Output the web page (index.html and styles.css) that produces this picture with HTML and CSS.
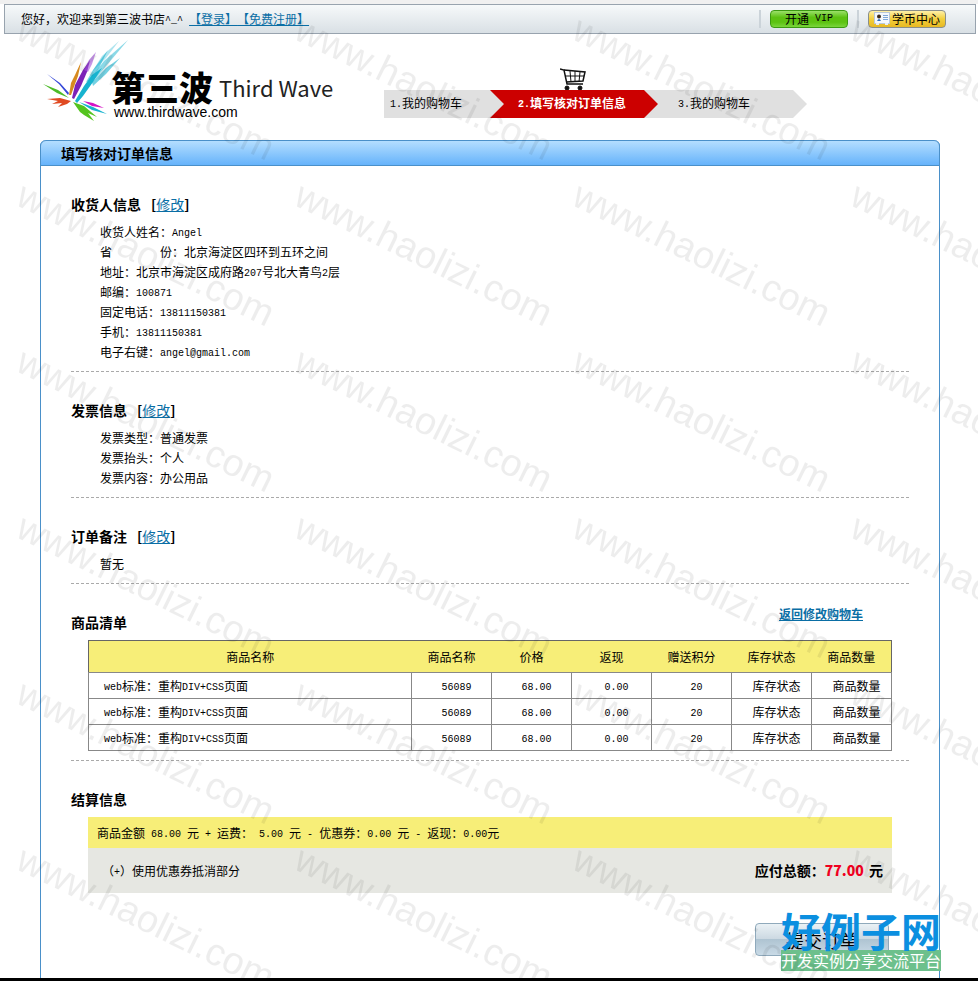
FILE: index.html
```
<!DOCTYPE html>
<html lang="zh-CN">
<head>
    <meta charset="UTF-8">
    <meta name="viewport" content="width=device-width, initial-scale=1.0">
    <title>第三波书店</title>
    <link rel="stylesheet" href="styles.css">
</head>
<body>
    <div class="topbar">
        <p class="welcome">您好，欢迎来到第三波书店<span class="en">^_^ </span><a href="#">【登录】</a><a href="#">【免费注册】</a></p>
        <div class="top-buttons">
            <span class="divider"></span>
            <button type="button" class="top-btn vip">开通<span class="en"> VIP</span></button>
            <span class="divider"></span>
            <button type="button" class="top-btn coin">
                <svg width="16" height="14" viewBox="0 0 16 14" aria-hidden="true">
                    <rect x="0.5" y="0.5" width="15" height="11" fill="#f4f8fc" stroke="#b9c8da"/>
                    <circle cx="5" cy="4.5" r="2" fill="#3a2a1a"/>
                    <path d="M3 9 Q5 5 7 9 Z" fill="#2f6fc0"/>
                    <path d="M9 3.5H14M9 5.5H14M9 7.5H14" stroke="#7da7d8"/>
                    <path d="M2 12h3M11 12h3" stroke="#e8eef4" stroke-width="2"/>
                </svg>
                学币中心
            </button>
        </div>
    </div>

    <div class="page">
        <header class="header">
            <div class="logo">
                <svg class="splash" width="75" height="80" viewBox="0 0 75 80" aria-hidden="true">
                    <g fill="#17b3cf">
                        <path d="M29 57 L38 42 L46 31 L56 24 L47 38 L37 52 L31 59 Z"/>
                        <path d="M40 38 L47 26 L62 6 L53 24 L45 36 Z" opacity="0.6"/>
                        <path d="M44 35 L58 17 L82 -4 L66 15 L50 34 Z" opacity="0.5"/>
                        <path d="M46 38 L60 24 L74 14 L60 30 L47 42 Z" opacity="0.6"/>
                        <path d="M46 28 L56 12 L73 -3 L60 14 Z" opacity="0.35"/>
                        <path d="M33 58 L47 63 L61 70 L46 66 Z"/>
                    </g>
                    <path d="M26 54 L29 41 L37 26 L44 16 L41 28 L35 42 L28 55 Z" fill="#7c22b8"/>
                    <path d="M38 26 L43 16 L50 8 L46 20 L42 28 Z" fill="#a04fd8" opacity="0.6"/>
                    <path d="M23 51 L25 39 L29 31 L35 18 L32 32 L29 40 L25 51 Z" fill="#d78a1f"/>
                    <path d="M22 51 L13 40 L1 30 L14 39 L23 49 Z" fill="#3548d8"/>
                    <path d="M23 54 L11 49 L-3 40 L12 46 Z" fill="#4cbb27"/>
                    <path d="M25 57 L14 54 L1 55 L12 57 L6 60 L16 59 L12 63 L21 60 Z" fill="#e04a22"/>
                    <path d="M27 58 L38 62 L51 73 L42 69 L48 77 L38 71 L34 68 Z" fill="#55c41f"/>
                    <path d="M37 57 L47 59 L58 64 L46 62 Z" fill="#d414c4"/>
                </svg>
                <div class="logo-text">
                    <p class="logo-name"><strong>第三波</strong><span>Third Wave</span></p>
                    <p class="logo-url">www.thirdwave.com</p>
                </div>
            </div>

            <div class="progress">
                <svg class="cart" width="26" height="23" viewBox="0 0 26 23" fill="none" stroke="#111" aria-hidden="true">
                    <path d="M0 1 L4 2 L7 16 H23" stroke-width="1.5"/>
                    <path d="M4 2 L25 4 L23 13 L6 14" stroke-width="1.5"/>
                    <path d="M5 8 H24M10 3 L11 14M15 3 V14M20 4 L19 14"/>
                    <circle cx="7" cy="20" r="2" fill="#111"/>
                    <circle cx="20" cy="20" r="2" fill="#111"/>
                </svg>
                <ol class="steps">
                    <li><span class="en">1.</span>我的购物车</li>
                    <li class="current"><span class="en">2.</span>填写核对订单信息</li>
                    <li><span class="en">3.</span>我的购物车</li>
                </ol>
            </div>
        </header>

        <main class="order">
            <h1>填写核对订单信息</h1>

            <section>
                <h2>收货人信息<span class="edit">[<a href="#">修改</a>]</span></h2>
                <ul class="info">
                    <li>收货人姓名：<span class="en">Angel</span></li>
                    <li>省　　　　份：北京海淀区四环到五环之间</li>
                    <li>地址：北京市海淀区成府路<span class="en">207</span>号北大青鸟<span class="en">2</span>层</li>
                    <li>邮编：<span class="en">100871</span></li>
                    <li>固定电话：<span class="en">13811150381</span></li>
                    <li>手机：<span class="en">13811150381</span></li>
                    <li>电子右键：<span class="en">angel@gmail.com</span></li>
                </ul>
            </section>

            <section>
                <h2>发票信息<span class="edit">[<a href="#">修改</a>]</span></h2>
                <ul class="info">
                    <li>发票类型：普通发票</li>
                    <li>发票抬头：个人</li>
                    <li>发票内容：办公用品</li>
                </ul>
            </section>

            <section>
                <h2>订单备注<span class="edit">[<a href="#">修改</a>]</span></h2>
                <ul class="info">
                    <li>暂无</li>
                </ul>
            </section>

            <section>
                <div class="list-head">
                    <h2>商品清单</h2>
                    <a href="#">返回修改购物车</a>
                </div>
                <table class="goods">
                    <thead>
                        <tr>
                            <th class="name">商品名称</th>
                            <th>商品名称</th>
                            <th>价格</th>
                            <th>返现</th>
                            <th>赠送积分</th>
                            <th>库存状态</th>
                            <th>商品数量</th>
                        </tr>
                    </thead>
                    <tbody>
                        <tr>
                            <td class="name"><span class="en">web</span>标准：重构<span class="en">DIV+CSS</span>页面</td>
                            <td><span class="en">56089</span></td>
                            <td><span class="en">68.00</span></td>
                            <td><span class="en">0.00</span></td>
                            <td><span class="en">20</span></td>
                            <td>库存状态</td>
                            <td>商品数量</td>
                        </tr>
                        <tr>
                            <td class="name"><span class="en">web</span>标准：重构<span class="en">DIV+CSS</span>页面</td>
                            <td><span class="en">56089</span></td>
                            <td><span class="en">68.00</span></td>
                            <td><span class="en">0.00</span></td>
                            <td><span class="en">20</span></td>
                            <td>库存状态</td>
                            <td>商品数量</td>
                        </tr>
                        <tr>
                            <td class="name"><span class="en">web</span>标准：重构<span class="en">DIV+CSS</span>页面</td>
                            <td><span class="en">56089</span></td>
                            <td><span class="en">68.00</span></td>
                            <td><span class="en">0.00</span></td>
                            <td><span class="en">20</span></td>
                            <td>库存状态</td>
                            <td>商品数量</td>
                        </tr>
                    </tbody>
                </table>
            </section>

            <section class="checkout">
                <h2>结算信息</h2>
                <p class="sum">商品金额<span class="en"> 68.00 </span>元<span class="en"> + </span>运费：<span class="en"> 5.00 </span>元<span class="en"> - </span>优惠券：<span class="en">0.00 </span>元<span class="en"> - </span>返现：<span class="en">0.00</span>元</p>
                <div class="total">
                    <p>（<span class="en">+</span>）使用优惠券抵消部分</p>
                    <p class="pay">应付总额：<strong>77.00</strong> 元</p>
                </div>
                <button type="submit" class="submit">提交订单</button>
            </section>
        </main>
    </div>
    <footer class="bottom-line"></footer>

    <div class="badge">
        <p class="badge-name">好例子网</p>
        <p class="badge-desc">开发实例分享交流平台</p>
    </div>

    <svg class="watermark" aria-hidden="true">
        <defs>
            <pattern id="mark" width="278" height="166" patternUnits="userSpaceOnUse" y="16">
                <text transform="translate(14 22) rotate(26)">www.haolizi.com</text>
            </pattern>
        </defs>
        <rect width="100%" height="100%" fill="url(#mark)"/>
    </svg>
</body>
</html>
```
FILE: styles.css
```
:root {
    --link: #0a6ea5;
    --blue-line: #4a90c9;
    --yellow: #f7ee78;
    --step-bg: #e0e0e0;
}

* {
    box-sizing: border-box;
    margin: 0;
    padding: 0;
}
body {
    position: relative;
    display: flex;
    flex-direction: column;
    min-height: 100vh;
    border-top: 4px solid #f0f0f0;
    font: 12px/20px "Noto Sans CJK SC", sans-serif;
    text-spacing-trim: space-all;
    color: #000;
    background: #fff;
}
ul, ol {
    list-style: none;
}
a {
    color: var(--link);
}
button {
    font: inherit;
    cursor: pointer;
}
/* half-width latin letters and digits */
.en {
    font-family: "Liberation Mono", monospace;
    font-size: 10px;
    line-height: 1;
    vertical-align: 1px;
    white-space: pre;
}

/* top bar */
.topbar {
    display: flex;
    justify-content: space-between;
    align-items: center;
    height: 30px;
    margin: 0 2px 0 4px;
    padding: 0 29px 0 16px;
    border: 1px solid #98a3ae;
    background: linear-gradient(#f6f9fa, #d9e0e5);
}
.top-buttons {
    display: flex;
    gap: 9px;
}
.divider {
    width: 2px;
    background: #cbd3d9;
}
.top-btn {
    display: flex;
    align-items: center;
    justify-content: center;
    width: 78px;
    height: 18px;
    line-height: 16px;
    border-radius: 4px;
    white-space: nowrap;
}
.vip {
    border: 1px solid #3c9a12;
    background: linear-gradient(#9be06a, #5cc212 40%, #5cc212 70%, #7ad63c);
}
.coin {
    gap: 2px;
    border: 1px solid #8a8f8a;
    background: linear-gradient(#fff0a8, #f2cf3c 50%, #e8b923);
}

/* header */
.page {
    display: flex;
    flex: 1;
    flex-direction: column;
    padding-left: 2px;
}
.header {
    display: flex;
    justify-content: space-between;
    align-items: flex-start;
    width: 100%;
    max-width: 900px;
    height: 106px;
    margin: 0 auto;
    padding: 10px 133px 0 6px;
}
.logo {
    display: flex;
}
.splash {
    overflow: visible;
    margin-right: -14px;
}
.logo-text {
    padding-top: 26px;
}
.logo-name {
    display: flex;
    align-items: center;
    gap: 6px;
    height: 34px;
    padding-left: 4px;
    white-space: nowrap;
}
.logo-name strong {
    font-size: 34px;
    font-weight: 900;
}
.logo-name span {
    font-size: 22px;
    color: #222;
}
.logo-url {
    padding-left: 7px;
    font: 14px/16px "Liberation Sans", sans-serif;
}
.progress {
    padding-top: 24px;
}
.cart {
    display: block;
    margin-left: 176px;
}
.steps {
    display: flex;
    width: 423px;
    height: 28px;
    line-height: 26px;
    margin-top: -1px;
    background: var(--step-bg);
    clip-path: polygon(0 0, 409px 0, 100% 50%, 409px 100%, 0 100%);
}
.steps li {
    width: 106px;
    padding-left: 6px;
}
.steps .current {
    width: 168px;
    padding-left: 28px;
    color: #fff;
    font-weight: bold;
    background: #c00;
    clip-path: polygon(0 0, 154px 0, 100% 50%, 154px 100%, 0 100%, 14px 50%);
}
.steps .current + li {
    padding-left: 20px;
}

/* order box */
.order {
    flex: 1;
    width: 100%;
    max-width: 900px;
    margin: 0 auto;
    border: 1px solid var(--blue-line);
    border-width: 0 1px;
    border-radius: 6px 6px 0 0;
}
h1 {
    height: 26px;
    margin: 0 -1px;
    padding-left: 20px;
    font-size: 14px;
    line-height: 24px;
    border: 1px solid var(--blue-line);
    border-radius: 6px 6px 0 0;
    background: linear-gradient(#b4deff, #66b3fb);
}
section {
    margin: 0 30px;
    padding: 28px 0 9px;
    border-bottom: 1px dashed #aaa;
}
h2 {
    margin-bottom: 8px;
    font-size: 14px;
    line-height: 20px;
}
.edit {
    margin-left: 10px;
}
.edit a {
    font-weight: normal;
}
.info {
    padding-left: 29px;
}
.list-head {
    display: flex;
    justify-content: space-between;
}
.list-head a {
    margin: -8px 46px 0 0;
    font-weight: bold;
}

/* goods table */
.goods {
    width: calc(100% - 34px);
    margin: 0 17px;
    border-collapse: collapse;
    table-layout: fixed;
    border: 1px solid #666;
}
.goods th {
    width: 80px;
    height: 32px;
    font-weight: normal;
    background: var(--yellow);
}
.goods th.name {
    width: auto;
}
.goods td {
    height: 26px;
    padding-left: 10px;
    line-height: 18px;
    text-align: center;
    border: 1px solid #888;
}
.goods td.name {
    padding-left: 15px;
    text-align: left;
}

/* settlement */
.checkout {
    border-bottom: 0;
}
.sum {
    margin: 0 17px;
    padding: 0 9px;
    line-height: 31px;
    background: var(--yellow);
}
.total {
    display: flex;
    justify-content: space-between;
    margin: 0 17px;
    padding: 0 9px 0 14px;
    line-height: 45px;
    background: #e6e7e2;
}
.pay {
    font-size: 14px;
    font-weight: bold;
}
.pay strong {
    margin-right: 2px;
    color: #f00020;
}
.submit {
    display: block;
    width: 134px;
    height: 33px;
    margin: 30px 20px 0 auto;
    font-size: 18px;
    line-height: 30px;
    border: 1px solid #8fa9bb;
    border-radius: 4px;
    background: linear-gradient(#eaf1f5, #ccd9e2 48%, #afc4d2 50%, #c9dae6);
}
.bottom-line {
    height: 3px;
    background: #000;
}

/* site badge in the corner */
.badge {
    position: absolute;
    right: 37px;
    bottom: 10px;
    width: 160px;
    text-align: center;
    white-space: nowrap;
}
.badge-name {
    font-size: 40px;
    font-weight: bold;
    line-height: 40px;
    color: #0b8fe0;
}
.badge-desc {
    font-size: 16px;
    line-height: 21px;
    color: #fff;
    background: #6dc08c;
}

.watermark {
    position: absolute;
    top: -4px;
    left: 0;
    width: 100%;
    height: 978px;
    pointer-events: none;
}
.watermark text {
    font: 38px "Liberation Sans", sans-serif;
    fill: rgba(0, 0, 0, 0.07);
}
```
